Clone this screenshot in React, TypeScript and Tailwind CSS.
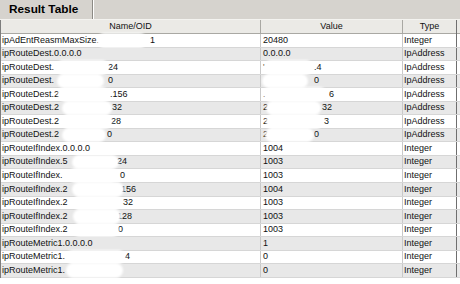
import React from "react";

type Cell = {
  text: string;
  // x (relative to the cell) where the visible tail of a redacted value starts
  tailAt?: number;
  tail?: string;
};

type Row = {
  name: Cell;
  value: Cell;
  type: string;
  // redaction smudges, [left, right] in page px
  blots?: [number, number][];
};

const rows: Row[] = [
  { name: { text: "ipAdEntReasmMaxSize.", tailAt: 148, tail: "1" }, value: { text: "20480" }, type: "Integer", blots: [[97, 147]] },
  { name: { text: "ipRouteDest.0.0.0.0" }, value: { text: "0.0.0.0" }, type: "IpAddress" },
  { name: { text: "ipRouteDest.", tailAt: 106, tail: "24" }, value: { text: "'", tailAt: 51, tail: ".4" }, type: "IpAddress", blots: [[56, 109], [264, 313]] },
  { name: { text: "ipRouteDest.", tailAt: 106, tail: "0" }, value: { text: "", tailAt: 51, tail: "0" }, type: "IpAddress", blots: [[57, 104], [262, 308]] },
  { name: { text: "ipRouteDest.2", tailAt: 108, tail: ".156" }, value: { text: ".", tailAt: 66, tail: "6" }, type: "IpAddress", blots: [[58, 109], [264, 327]] },
  { name: { text: "ipRouteDest.2", tailAt: 110, tail: "32" }, value: { text: "2", tailAt: 59, tail: "32" }, type: "IpAddress", blots: [[62, 112], [266, 321]] },
  { name: { text: "ipRouteDest.2", tailAt: 109, tail: "28" }, value: { text: "2", tailAt: 61, tail: "3" }, type: "IpAddress", blots: [[62, 112], [266, 323]] },
  { name: { text: "ipRouteDest.2", tailAt: 105, tail: "0" }, value: { text: "2", tailAt: 51, tail: "0" }, type: "IpAddress", blots: [[62, 106], [265, 314]] },
  { name: { text: "ipRouteIfIndex.0.0.0.0" }, value: { text: "1004" }, type: "Integer" },
  { name: { text: "ipRouteIfIndex.5", tailAt: 115, tail: "24" }, value: { text: "1003" }, type: "Integer", blots: [[72, 119]] },
  { name: { text: "ipRouteIfIndex.", tailAt: 118, tail: "0" }, value: { text: "1003" }, type: "Integer", blots: [[68, 117]] },
  { name: { text: "ipRouteIfIndex.2", tailAt: 119, tail: "156" }, value: { text: "1004" }, type: "Integer", blots: [[72, 124]] },
  { name: { text: "ipRouteIfIndex.2", tailAt: 121, tail: "32" }, value: { text: "1003" }, type: "Integer", blots: [[73, 121]] },
  { name: { text: "ipRouteIfIndex.2", tailAt: 115, tail: "128" }, value: { text: "1003" }, type: "Integer", blots: [[73, 121]] },
  { name: { text: "ipRouteIfIndex.2", tailAt: 116, tail: "0" }, value: { text: "1003" }, type: "Integer", blots: [[73, 119]] },
  { name: { text: "ipRouteMetric1.0.0.0.0" }, value: { text: "1" }, type: "Integer" },
  { name: { text: "ipRouteMetric1.", tailAt: 123, tail: "4" }, value: { text: "0" }, type: "Integer", blots: [[66, 125]] },
  { name: { text: "ipRouteMetric1.", tailAt: 123, tail: "" }, value: { text: "0" }, type: "Integer", blots: [[66, 123]] },
];

function CellText({ cell }: { cell: Cell }) {
  if (cell.tailAt === undefined) return <span className="whitespace-nowrap">{cell.text}</span>;
  return (
    <span className="flex whitespace-nowrap">
      <span className="shrink-0" style={{ width: cell.tailAt }}>
        {cell.text}
      </span>
      <span>{cell.tail}</span>
    </span>
  );
}

export default function App() {
  return (
    <div className="w-[460px] h-[284px] overflow-hidden bg-white text-[9px] text-[#111] font-['Liberation_Sans',Arial,sans-serif]">
      {/* tab strip */}
      <div className="flex h-[20px] bg-[#d6d3ce] border-b border-[#f4f3f0]">
        <div className="flex items-center w-[93px] pl-[9px] border-r border-[#8c8a85] shadow-[1px_0_0_#ffffff] bg-[#d6d3ce]">
          <span className="text-[11.8px] font-bold text-black">Result Table</span>
        </div>
      </div>

      {/* table */}
      <div className="border-l border-[#7d7d7d]">
        <div className="grid grid-cols-[260px_142px_54px_1fr] h-[14px] bg-[#ebeae6] border-b border-[#a9a8a3]">
          <div className="flex items-center justify-center border-r border-[#a9a8a3]">Name/OID</div>
          <div className="flex items-center justify-center border-r border-[#a9a8a3]">Value</div>
          <div className="flex items-center justify-center border-r border-[#6f6f6f]">Type</div>
          <div />
        </div>

        {rows.map((r, i) => (
          <div
            key={i}
            className={`relative grid grid-cols-[260px_142px_54px_1fr] h-[13.55px] border-b border-[#d6d6d6] ${
              i % 2 === 1 ? "bg-[#e8e8e8]" : "bg-white"
            }`}
          >
            <div className="flex items-center pl-[1px] border-r border-[#c9c9c9] overflow-hidden">
              <CellText cell={r.name} />
            </div>
            <div className="flex items-center pl-[2px] border-r border-[#c9c9c9] overflow-hidden">
              <CellText cell={r.value} />
            </div>
            <div className="flex items-center pl-[1px] border-r border-[#6f6f6f] overflow-hidden whitespace-nowrap">
              {r.type}
            </div>
            <div />
            {r.blots?.map(([a, b], j) => (
              <span
                key={j}
                className="absolute top-[-1px] bottom-[-1px] rounded-full bg-white blur-[1px]"
                style={{ left: a - 1, width: b - a }}
              />
            ))}
          </div>
        ))}
      </div>
    </div>
  );
}
